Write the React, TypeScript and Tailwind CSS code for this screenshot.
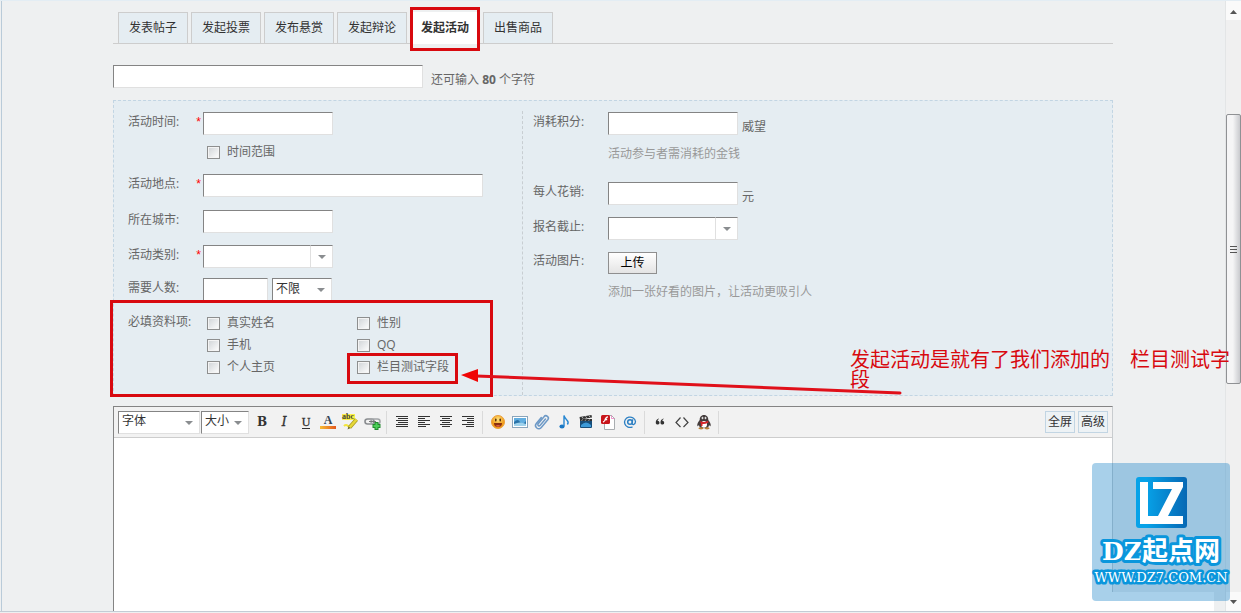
import type { ReactNode } from 'react';
import { clsx } from 'clsx';

const tabs = ['发表帖子', '发起投票', '发布悬赏', '发起辩论', '发起活动', '出售商品'];

const profileFields = ['真实姓名', '性别', '手机', 'QQ', '个人主页', '栏目测试字段'];

const fieldBorder = 'border border-t-[#848484] border-l-[#848484] border-r-[#e0e0e0] border-b-[#e0e0e0] bg-white';

function Caret() {
  return (
    <svg width="8" height="4" viewBox="0 0 8 4" className="pointer-events-none">
      <path d="M0 0h8L4 4z" fill="#8a8d90" />
    </svg>
  );
}

function Row({ id, label, required, className, children }: {
  id: string;
  label: string;
  required?: boolean;
  className?: string;
  children: ReactNode;
}) {
  return (
    <div className={clsx('flex items-start', className)}>
      <label htmlFor={id} className="flex w-[75px] shrink-0 justify-between pr-[2px] leading-5">
        {label}:
        {required && <span className="font-['Liberation_Sans',sans-serif] text-[#f00]">*</span>}
      </label>
      {children}
    </div>
  );
}

function TextField({ id, className }: { id: string; className: string }) {
  return <input id={id} type="text" className={clsx('h-[23px] px-1 outline-none', fieldBorder, className)} />;
}

function Combo({ id }: { id: string }) {
  return (
    <div className="flex">
      <TextField id={id} className="w-[108px]" />
      <button
        type="button"
        aria-label="展开"
        className="flex h-[23px] w-[22px] items-center justify-center border border-l-0 border-t-[#848484] border-r-[#e0e0e0] border-b-[#e0e0e0] bg-white"
      >
        <Caret />
      </button>
    </div>
  );
}

function Select({ id, label, option, className }: { id: string; label: string; option: string; className: string }) {
  return (
    <div className={clsx('relative', className)}>
      <select
        id={id}
        aria-label={label}
        className={clsx('block h-[23px] w-full appearance-none pb-[2px] pl-[3px] text-[#333] outline-none', fieldBorder)}
      >
        <option>{option}</option>
      </select>
      <span className="pointer-events-none absolute top-2.5 right-[7px]">
        <Caret />
      </span>
    </div>
  );
}

function Check({ label }: { label: string }) {
  return (
    <label className="flex h-[22px] items-center gap-[7px]">
      <input
        type="checkbox"
        className="size-[13px] shrink-0 appearance-none border border-[#8e8f8f] bg-linear-to-br from-[#cfd3d6] to-white shadow-[inset_0_0_0_1px_#f4f4f4]"
      />
      {label}
    </label>
  );
}

function Tool({ label, children }: { label: string; children: ReactNode }) {
  return (
    <button type="button" aria-label={label} className="flex h-5 w-[22px] items-center justify-center">
      <svg width="20" height="20" viewBox="0 0 20 20" fill="none">
        {children}
      </svg>
    </button>
  );
}

function Divider() {
  return <span className="mr-1 ml-[3px] h-[23px] w-px bg-[#dadada]" />;
}

function TextTools() {
  const serif = "'Liberation Serif', serif";
  return (
    <>
      <Tool label="粗体">
        <text x="10" y="14" textAnchor="middle" fontFamily="'DejaVu Serif', serif" fontWeight="700" fontSize="12" fill="#333">B</text>
      </Tool>
      <Tool label="斜体">
        <text x="10" y="14" textAnchor="middle" fontFamily="'DejaVu Serif', serif" fontStyle="italic" fontSize="12" fill="#333" stroke="#333" strokeWidth=".4">I</text>
      </Tool>
      <Tool label="下划线">
        <text x="10" y="14" textAnchor="middle" fontFamily={serif} fontSize="12" fill="#333" stroke="#333" strokeWidth=".3">U</text>
        <path d="M6 16.500h8" stroke="#333" />
      </Tool>
      <Tool label="文字颜色">
        <text x="10" y="12" textAnchor="middle" fontFamily={serif} fontWeight="700" fontSize="12" fill="#345">A</text>
        <defs>
          <linearGradient id="ink">
            <stop stopColor="#f7bd33" />
            <stop offset="1" stopColor="#e2571e" />
          </linearGradient>
        </defs>
        <rect x="2" y="14" width="16" height="3" fill="url(#ink)" />
      </Tool>
      <Tool label="背景色">
        <rect x="2" y="2" width="13" height="6" fill="#fbf14a" />
        <path d="M4 14q2-2 4 0l2 2" stroke="#f3e53c" strokeWidth="2" />
        <path d="M9.500 15.500l7-8" stroke="#a99a20" strokeWidth="4" />
        <path d="M9.500 15.500l7-8" stroke="#e6d838" strokeWidth="2.500" />
        <path d="M7.500 17.500l1-3 2 1.500z" fill="#6b6b3a" />
        <text x="8" y="7" textAnchor="middle" fontFamily={serif} fontWeight="700" fontSize="8" fill="#443">abc</text>
      </Tool>
      <Tool label="链接">
        <rect x="3" y="7" width="9" height="5" rx="2.500" stroke="#8a8d90" strokeWidth="1.600" />
        <rect x="9" y="7" width="9" height="5" rx="2.500" stroke="#a2a5a8" strokeWidth="1.600" />
        <path d="M7 9.500h7" stroke="#777" />
        <path d="M14.500 10v8M10.500 14h8" stroke="#238a2e" strokeWidth="4" />
        <path d="M14.500 11v6M11.500 14h6" stroke="#4ccf58" strokeWidth="2" />
      </Tool>
    </>
  );
}

// Every drawing is six strokes, two pixels apart
const alignments = [
  { label: '自动排版', d: 'M4 4.500h12M6 6.500h10M4 8.500h12M6 10.500h10M4 12.500h12M4 14.500h12' },
  { label: '居左', d: 'M4 4.500h12M4 6.500h7M4 8.500h12M4 10.500h7M4 12.500h12M4 14.500h8' },
  { label: '居中', d: 'M4 4.500h12M6 6.500h8M4 8.500h12M6 10.500h8M4 12.500h12M6 14.500h8' },
  { label: '居右', d: 'M4 4.500h12M9 6.500h7M4 8.500h12M9 10.500h7M4 12.500h12M8 14.500h8' },
];

function MediaTools() {
  return (
    <>
      <Tool label="表情">
        <defs>
          <radialGradient id="face" cy=".3">
            <stop stopColor="#ffe27a" />
            <stop offset="1" stopColor="#f09a18" />
          </radialGradient>
        </defs>
        <circle cx="10" cy="10" r="6.500" fill="url(#face)" stroke="#eca03a" />
        <path d="M6 11h8a4 4 0 0 1-8 0z" fill="#8a2f10" />
        <path d="M7.500 13.800a3.500 2.500 0 0 1 5 0q-2.500 2-5 0z" fill="#e2604a" />
        <rect x="7" y="6.500" width="1.500" height="3" rx=".7" fill="#5a3010" />
        <rect x="11.500" y="6.500" width="1.500" height="3" rx=".7" fill="#5a3010" />
      </Tool>
      <Tool label="图片">
        <rect x="2.500" y="4.500" width="15" height="11" fill="#fff" stroke="#8aa5bb" />
        <rect x="4" y="6" width="12" height="8" fill="#62aee0" />
        <path d="M4 10q4-4 6 0t6-1v5H4z" fill="#2872a8" />
        <path d="M4 12q6-3 12 0v2H4z" fill="#9fd2ec" />
      </Tool>
      <Tool label="附件">
        <path
          d="M13.500 7l-5.500 6.500a1.300 1.300 0 0 1-2-1.600l6-7.200a2.400 2.400 0 0 1 3.800 3l-6.500 7.800a3.200 3.200 0 0 1-5-4l5-6"
          stroke="#6d99c6"
          strokeWidth="1.500"
          strokeLinecap="round"
        />
      </Tool>
      <Tool label="音乐">
        <ellipse cx="8" cy="14.500" rx="2.600" ry="2.100" fill="#1b78c4" />
        <path d="M10 14V3.500q.5 2.500 2.800 4.500t.6 4.500" stroke="#2787d2" strokeWidth="1.400" />
      </Tool>
      <Tool label="视频">
        <rect x="4" y="8" width="12" height="8" rx="1" fill="#174e7a" />
        <path d="M5 13q5-5 10 0v2H5z" fill="#3c9ad8" />
        <path d="M3.500 5l12-2 .5 2.600-12 2z" fill="#333" />
        <path d="M4 7h12v2H4z" fill="#333" />
        <path d="M6 5l1.200 1.500M9.500 4.300l1.200 1.500M13 3.800l1.200 1.500M6.500 7.500l-.8 1.200M10 7.500l-.8 1.200M13.500 7.500l-.8 1.200" stroke="#ddd" strokeWidth=".8" />
      </Tool>
      <Tool label="Flash">
        <path d="M6.500 3.500h7l3 3v11h-10z" fill="#fff" stroke="#a9adb0" />
        <path d="M13.500 3.500v3h3" stroke="#d39" strokeOpacity=".5" />
        <rect x="3" y="3" width="9" height="9" rx="1.500" fill="#c8141a" />
        <path d="M10 4.800q-2 0-2.600 2.400T5 10.200M6.500 7.500h2.700" stroke="#fff" strokeWidth="1.300" />
      </Tool>
      <Tool label="@朋友">
        <circle cx="10" cy="10" r="2.300" stroke="#2b7fc3" strokeWidth="1.500" />
        <path d="M12.700 7.300l-.6 4q-.1 1.500 1.400 1.300 2-.6 2-3a5.500 5.200 0 1 0-3 5.300" stroke="#2b7fc3" strokeWidth="1.300" />
      </Tool>
    </>
  );
}

function CodeTools() {
  return (
    <>
      <Tool label="引用">
        <path d="M9 7q-1.500.8-1.400 1.800a1.900 1.900 0 1 1-1.800 2.400Q5.300 7.800 8.800 6.500zM13.700 7q-1.500.8-1.400 1.800a1.900 1.900 0 1 1-1.800 2.400Q10 7.800 13.500 6.500z" fill="#333" />
      </Tool>
      <Tool label="代码">
        <path d="M8.500 5.500L4 10.500l4.500 4.500M11.500 5.500l4.500 5-4.500 4.500" stroke="#444" strokeWidth="1.200" />
      </Tool>
      <Tool label="QQ">
        <path d="M10 3c-3 0-4.300 2.400-4.300 5-1.500 2-2.900 4-2.300 6 .3.500 1-.2 1.500-1 .4 1.600 1 2.500 2 3h6.200c1-.5 1.600-1.400 2-3 .5.800 1.200 1.500 1.500 1 .6-2-.8-4-2.300-6 0-2.600-1.300-5-4.300-5z" fill="#443c3c" />
        <path d="M10 9c-2 0-3 1.500-3 3.500s1 3.200 3 3.200 3-1.200 3-3.200S12 9 10 9z" fill="#fff" />
        <ellipse cx="8.500" cy="6" rx=".9" ry="1.200" fill="#ddd" />
        <ellipse cx="11.500" cy="6" rx=".9" ry="1.200" fill="#ddd" />
        <path d="M6 9q4 2.200 8-.3l.5 1.800q-4 2-6 1.500v2H7l-.2-2.500z" fill="#d8262b" />
        <ellipse cx="7" cy="16.300" rx="2.600" ry="1.100" fill="#b9803a" />
        <ellipse cx="13" cy="16.300" rx="2.600" ry="1.100" fill="#b9803a" />
      </Tool>
    </>
  );
}

function EventForm() {
  return (
    <form className="relative mt-3 flex border border-dashed border-[#c2d5e3] bg-[#e5edf2] pt-2.5">
      <div className="w-[408px] shrink-0 pt-px pb-[17px] pl-3.5">
        <Row id="start" label="活动时间" required className="mb-[11px]">
          <div>
            <TextField id="start" className="w-[130px]" />
            <div className="mt-1.5 pl-1">
              <Check label="时间范围" />
            </div>
          </div>
        </Row>
        <Row id="place" label="活动地点" required className="mb-[13px]">
          <TextField id="place" className="w-[280px]" />
        </Row>
        <Row id="city" label="所在城市" className="mb-3">
          <TextField id="city" className="w-[130px]" />
        </Row>
        <Row id="kind" label="活动类别" required className="mb-2.5">
          <Combo id="kind" />
        </Row>
        <Row id="people" label="需要人数" className="mb-[11px]">
          <TextField id="people" className="w-[65px]" />
          <Select id="gender" label="性别限制" option="不限" className="ml-1 w-[60px]" />
        </Row>
        <fieldset className="relative flex items-start" aria-label="必填资料项">
          <span className="w-[75px] shrink-0 leading-5">必填资料项:</span>
          <div className="grid grid-cols-[150px_130px] pl-1">
            {profileFields.map((field) => (
              <Check key={field} label={field} />
            ))}
          </div>
          <div className="pointer-events-none absolute -top-3 -left-[18px] h-[97px] w-[383px] border-3 border-[#d8090f]" />
          <div className="pointer-events-none absolute top-[41px] left-[219px] h-[31px] w-[111px] border-3 border-[#d8090f]" />
        </fieldset>
      </div>

      <div className="flex-1 border-l border-dashed border-[#c8ced2] pt-px pl-2.5">
        <Row id="credit" label="消耗积分" className="mb-[18px]">
          <div>
            <div className="flex">
              <TextField id="credit" className="w-[130px]" />
              <span className="mt-[5px] ml-1 h-[18px] leading-5">威望</span>
            </div>
            <p className="mt-[9px] leading-5 text-[#999]">活动参与者需消耗的金钱</p>
          </div>
        </Row>
        <Row id="cost" label="每人花销" className="mb-3">
          <TextField id="cost" className="w-[130px]" />
          <span className="mt-[5px] ml-1 h-[18px] leading-5">元</span>
        </Row>
        <Row id="deadline" label="报名截止" className="mb-[11px]">
          <Combo id="deadline" />
        </Row>
        <Row id="upload" label="活动图片">
          <div>
            <button
              id="upload"
              type="button"
              className="mt-px block h-[22px] w-[49px] border border-[#8f8f8f] bg-linear-to-b from-white to-[#e4e4e4] leading-5 text-black"
            >
              上传
            </button>
            <p className="mt-2 leading-5 text-[#999]">添加一张好看的图片，让活动更吸引人</p>
          </div>
        </Row>
      </div>

      {/* 标注说明 */}
      <p className="absolute top-[249px] left-[736px] z-20 w-[385px] text-[20px] leading-5 text-[#d8090f]">
        发起活动是就有了我们添加的　栏目测试字段
      </p>
      <svg className="pointer-events-none absolute top-[265px] left-[346px] z-10" width="445" height="32" viewBox="0 0 445 32">
        <path d="M16 10L440 27" stroke="#e0101a" strokeWidth="3" strokeLinecap="round" />
        <path d="M1 9l17-6v13z" fill="#f00505" />
      </svg>
    </form>
  );
}

function Editor() {
  return (
    <section className="mt-2.5 flex flex-1 flex-col border border-b-0 border-t-[#848484] border-r-[#c8cccf] border-l-[#848484] bg-white">
      <div className="flex h-[31px] items-center border-b border-[#cdcdcd] bg-[#f2f2f2] px-1">
        <Select id="font" label="字体" option="字体" className="w-[82px]" />
        <Select id="size" label="大小" option="大小" className="ml-px w-[48px]" />
        <div className="ml-[2px] flex items-center">
          <TextTools />
          <Divider />
          {alignments.map(({ label, d }) => (
            <Tool key={label} label={label}>
              <path d={d} stroke="#333" />
            </Tool>
          ))}
          <Divider />
          <MediaTools />
          <Divider />
          <CodeTools />
          <Divider />
        </div>
        <div className="ml-auto flex gap-[3px] leading-[18px] text-[#333]">
          <button type="button" className="h-[22px] w-[30px] border border-[#c2d5e3] bg-[#edf2f5]">全屏</button>
          <button type="button" className="h-[22px] w-[30px] border border-[#c2d5e3] bg-[#edf2f5]">高级</button>
        </div>
      </div>
      <textarea aria-label="内容" className="w-full flex-1 resize-none bg-white outline-none" />
    </section>
  );
}

function ScrollRail() {
  return (
    <aside className="flex w-4 shrink-0 flex-col items-center border-l border-[#e3e5e6] bg-[#f0f0f0]">
      <div className="flex h-[19px] w-full items-center justify-center bg-[#fafafa] pt-[2px]">
        <svg width="7" height="4" viewBox="0 0 7 4"><path d="M0 4h7L3.500 0z" fill="#555" /></svg>
      </div>
      <div className="mt-[94px] flex h-[270px] w-full items-center justify-center rounded-[2px] border border-[#8f9194] bg-linear-to-r from-[#f5f5f6] from-45% to-[#c9cace]">
        <svg width="8" height="8" viewBox="0 0 8 8"><path d="M0 1.500h7M0 4.500h7M0 7.500h7" stroke="#555" /></svg>
      </div>
      <div className="mt-auto flex h-[19px] w-full items-center justify-center bg-[#fafafa]">
        <svg width="7" height="4" viewBox="0 0 7 4"><path d="M0 0h7L3.500 4z" fill="#555" /></svg>
      </div>
    </aside>
  );
}

function Watermark() {
  const serif = "'DejaVu Serif', 'Noto Sans CJK SC', serif";
  return (
    <div className="pointer-events-none absolute right-[11px] bottom-3 z-30 rounded bg-[#0679c3]/35">
      <svg width="138" height="138" viewBox="0 0 138 138" className="overflow-visible">
        <defs>
          <linearGradient id="tile">
            <stop offset=".2" stopColor="#07a2e8" />
            <stop offset="1" stopColor="#0768b4" />
          </linearGradient>
        </defs>
        <rect x="44" y="14" width="51" height="51" rx="3" fill="url(#tile)" />
        <path d="M48 19h8v34h10l14-27H61v-7h30v5L76 53h15v8H48z" fill="#fff" />
        <g fill="#fff" stroke="#0a96dc" strokeLinejoin="round" textAnchor="middle" fontFamily={serif} style={{ paintOrder: 'stroke' }}>
          <text x="69" y="97" fontSize="26" fontWeight="700" strokeWidth="6">
            <tspan fontSize="25">DZ</tspan>起点网
          </text>
          <text x="69" y="119" fontSize="13" strokeWidth="5">WWW.DZ7.COM.CN</text>
        </g>
      </svg>
    </div>
  );
}

export default function App() {
  return (
    <div className="relative flex min-h-screen flex-col bg-[#eef0f1] font-['Open_Sans','Noto_Sans_CJK_SC',sans-serif] text-[12px] text-[#666]">
      <div className="flex flex-1 border-t border-b border-t-[#e3edf4] border-b-[#c3ccd5] pl-px">
        <main className="flex flex-1 flex-col border-l border-[#b9cbd9] pr-px">
          <div className="mx-auto flex w-full max-w-[1000px] flex-1 flex-col">
            <nav className="flex gap-[3px] border-b border-[#cdcdcd] pt-[11px] pl-[5px]">
              {tabs.map((tab) => {
                const active = tab === '发起活动';
                return (
                  <a
                    key={tab}
                    href="#"
                    className={clsx(
                      'relative -mb-px flex h-8 w-[70px] items-center justify-center border text-[#333]',
                      active ? 'border-white bg-white font-bold' : 'border-[#cdcdcd] bg-[#e5edf2]',
                    )}
                  >
                    {tab}
                    {active && <span className="absolute -inset-x-px -top-1.5 -bottom-2 border-3 border-[#d8090f]" />}
                  </a>
                );
              })}
            </nav>
            <div className="mt-[21px] flex">
              <input
                type="text"
                aria-label="标题"
                className={clsx('h-[23px] w-[310px] px-1 outline-none', fieldBorder)}
              />
              <span className="mt-[5px] ml-2 h-[18px] leading-5">
                还可输入 <strong>80</strong> 个字符
              </span>
            </div>
            <EventForm />
            <Editor />
          </div>
        </main>
        <ScrollRail />
      </div>
      <div className="h-px bg-[#eef0f1]" />
      <div className="absolute right-[27px] bottom-[2px] h-[19px] w-[102px] bg-white" />
      <Watermark />
    </div>
  );
}
